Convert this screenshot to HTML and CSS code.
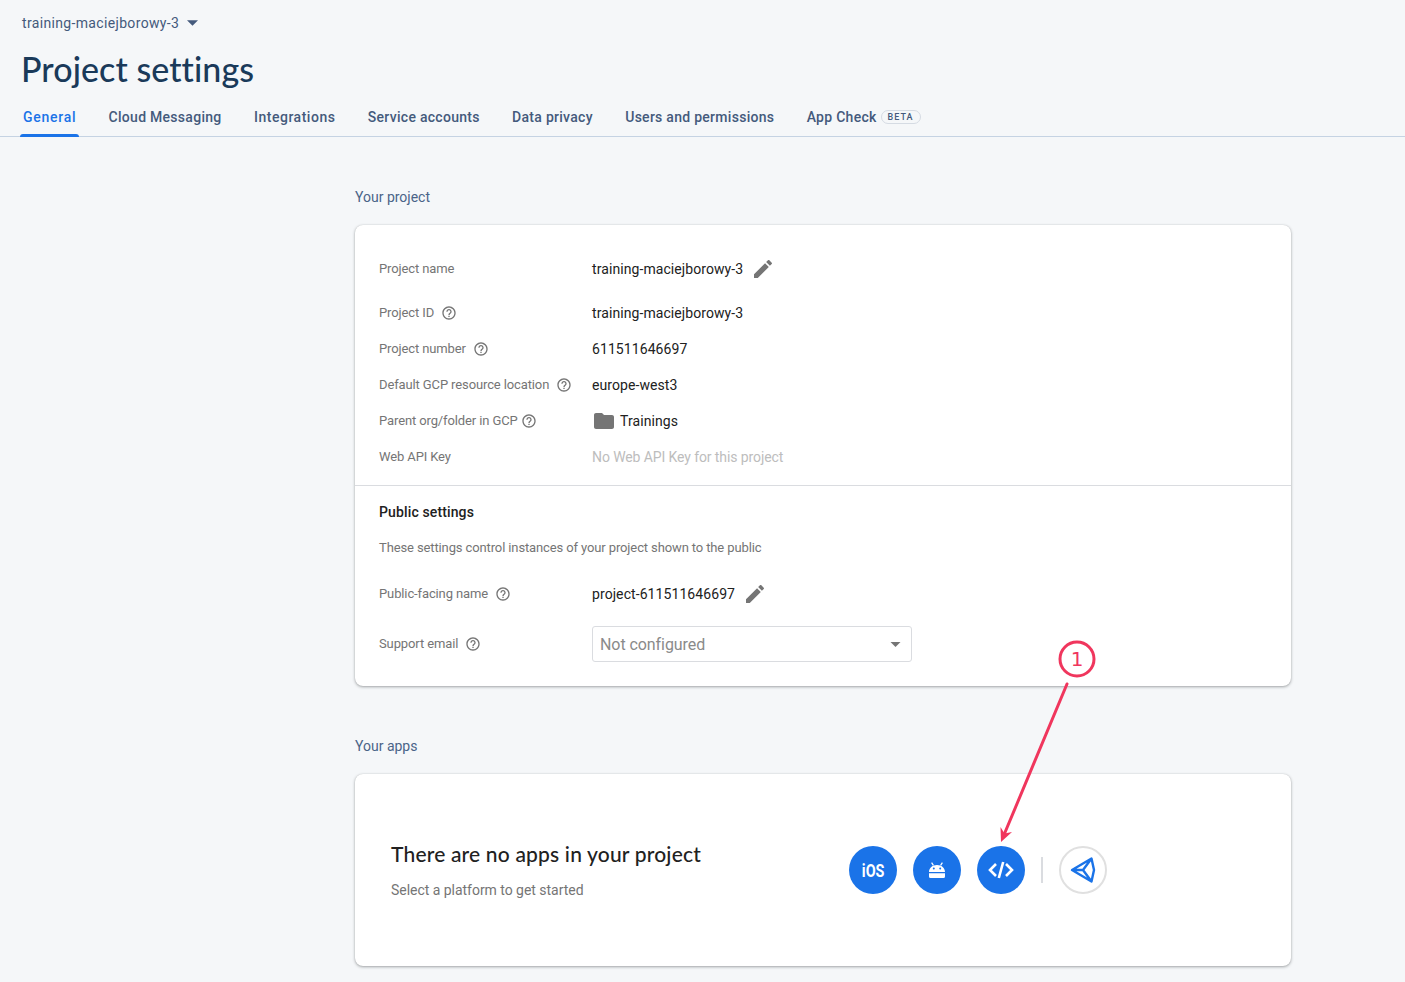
FILE: index.html
```html
<!DOCTYPE html>
<html lang="en">
<head>
<meta charset="utf-8">
<title>Project settings</title>
<link rel="stylesheet" href="styles.css">
</head>
<body>
<header class="header">
  <div class="crumb">training-maciejborowy-3 <svg class="crumb-arrow" viewBox="0 0 12 6" width="11" height="6"><path d="M0 0h12L6 6z"/></svg></div>
  <h1 class="title">Project settings</h1>
  <nav class="tabs">
    <a class="tab active">General</a>
    <a class="tab">Cloud Messaging</a>
    <a class="tab wide">Integrations</a>
    <a class="tab">Service accounts</a>
    <a class="tab">Data privacy</a>
    <a class="tab">Users and permissions</a>
    <a class="tab">App Check <span class="beta">BETA</span></a>
  </nav>
</header>
<main class="content">
  <h2 class="section">Your project</h2>
  <section class="card project">
    <div class="fields">
      <div class="row first"><div class="label">Project name</div><div class="value">training-maciejborowy-3<svg class="edit" viewBox="0 0 24 24" width="24" height="24"><use href="#i-edit"/></svg></div></div>
      <div class="row"><div class="label">Project ID<svg class="help" viewBox="0 0 24 24" width="16" height="16"><use href="#i-help"/></svg></div><div class="value">training-maciejborowy-3</div></div>
      <div class="row"><div class="label">Project number<svg class="help" viewBox="0 0 24 24" width="16" height="16"><use href="#i-help"/></svg></div><div class="value">611511646697</div></div>
      <div class="row"><div class="label">Default GCP resource location<svg class="help" viewBox="0 0 24 24" width="16" height="16"><use href="#i-help"/></svg></div><div class="value">europe-west3</div></div>
      <div class="row"><div class="label">Parent org/folder in GCP<svg class="help tight" viewBox="0 0 24 24" width="16" height="16"><use href="#i-help"/></svg></div><div class="value"><svg class="folder" viewBox="0 0 24 24" width="24" height="24"><path d="M10 4H4c-1.100 0-2 .9-2 2v12c0 1.100.9 2 2 2h16c1.100 0 2-.9 2-2V8c0-1.100-.9-2-2-2h-8l-2-2z"/></svg>Trainings</div></div>
      <div class="row"><div class="label">Web API Key</div><div class="value muted">No Web API Key for this project</div></div>
    </div>
    <div class="public">
      <h3 class="public-title">Public settings</h3>
      <p class="public-desc">These settings control instances of your project shown to the public</p>
      <div class="row facing"><div class="label">Public-facing name<svg class="help" viewBox="0 0 24 24" width="16" height="16"><use href="#i-help"/></svg></div><div class="value">project-611511646697<svg class="edit" viewBox="0 0 24 24" width="24" height="24"><use href="#i-edit"/></svg></div></div>
      <div class="row support"><div class="label">Support email<svg class="help" viewBox="0 0 24 24" width="16" height="16"><use href="#i-help"/></svg></div><div class="select"><span>Not configured</span><svg viewBox="0 0 12 6" width="11" height="5"><path d="M0 0h12L6 6z"/></svg></div></div>
    </div>
  </section>
  <h2 class="section apps-heading">Your apps</h2>
  <section class="card apps">
    <div class="apps-text">
      <h3 class="apps-title">There are no apps in your project</h3>
      <p class="apps-sub">Select a platform to get started</p>
    </div>
    <div class="platforms">
      <div class="platform"><span class="ios">iOS</span></div>
      <div class="platform">
        <svg viewBox="0 0 16 16" width="16" height="16"><path class="android-feeler" d="M2.600 .6L4.400 3.400M13.400 .6L11.600 3.400"/><path class="fill" d="M0 10C0 5.800 3.500 3 8 3s8 2.800 8 7zM4.800 5.400a1 1 0 1 0 0 2 1 1 0 0 0 0-2zm6.400 0a1 1 0 1 0 0 2 1 1 0 0 0 0-2zM0 11.200h16V14.500a1.500 1.500 0 0 1-1.500 1.500H1.500A1.500 1.500 0 0 1 0 14.500z"/></svg>
      </div>
      <div class="platform">
        <svg viewBox="0 0 28 28" width="28" height="28"><path class="stroke" d="M9 8l-6 6 6 6M19 8l6 6-6 6M16.200 6l-4.400 16"/></svg>
      </div>
      <div class="divider"></div>
      <div class="platform unity">
        <svg viewBox="0 0 28 28" width="28" height="28"><path class="unity-line" d="M3 14L22.500 2.500L25 14L22.500 25.500zM3 14H14M14 14L22.500 2.500M14 14L22.500 25.500"/></svg>
      </div>
    </div>
  </section>
</main>
<svg class="annotation" viewBox="0 0 1405 982" width="1405" height="982">
  <circle class="note-ring" cx="1077" cy="659" r="17"/>
  <text class="note-num" x="1077" y="666">1</text>
  <path class="note-line" d="M1067 684L1003.500 836"/>
  <path class="note-head" d="M1001 842L1000.500 827L1004.500 833.500L1012 832z"/>
</svg>
<svg class="defs" width="0" height="0">
  <defs>
    <symbol id="i-edit" viewBox="0 0 24 24"><path d="M3 17.250V21h3.750L17.810 9.940l-3.750-3.750L3 17.250zM20.710 7.040c.39-.39.39-1.020 0-1.410l-2.340-2.340c-.39-.39-1.020-.39-1.410 0l-1.830 1.830 3.750 3.750 1.830-1.830z"/></symbol>
    <symbol id="i-help" viewBox="0 0 24 24"><path d="M11 18h2v-2h-2v2zm1-16C6.480 2 2 6.480 2 12s4.480 10 10 10 10-4.480 10-10S17.520 2 12 2zm0 18c-4.410 0-8-3.590-8-8s3.590-8 8-8 8 3.590 8 8-3.590 8-8 8zm0-14c-2.210 0-4 1.790-4 4h2c0-1.100.9-2 2-2s2 .9 2 2c0 2-3 1.750-3 5h2c0-2.250 3-2.500 3-5 0-2.210-1.790-4-4-4z"/></symbol>
  </defs>
</svg>
</body>
</html>
```
FILE: styles.css
```css
* { box-sizing: border-box; }
html, body { margin: 0; padding: 0; }
body {
  width: 1405px;
  height: 982px;
  overflow: hidden;
  position: relative;
  background: #f5f7f9;
  font-family: Roboto, "Liberation Sans", sans-serif;
  color: #212121;
}
.header { padding: 14px 0 0 20px; border-bottom: 1px solid #c5d3e3; height: 137px; }
.crumb { height: 18px; line-height: 18px; padding-left: 2px; font-size: 14px; color: #445a7c; letter-spacing: .34px; display: flex; align-items: center; }
.crumb-arrow { margin-left: 8px; fill: #445a7c; }
.title { margin: 0; padding: 17px 0 0 1px; height: 60px; font-family: Lato, sans-serif; font-variant-ligatures: none; font-weight: 500; font-size: 34px; line-height: 40px; letter-spacing: .07px; color: #1a3a5a; }
.tabs { display: flex; gap: 26.4px; margin-top: 0; height: 45px; padding-top: 7px; }
.tab { padding: 0 3px; height: 38px; line-height: 37px; font-size: 14px; font-weight: 500; color: #445a7c; letter-spacing: .28px; white-space: nowrap; display: flex; align-items: flex-start; position: relative; }
.tab.wide { letter-spacing: .52px; }
.tab.active { color: #1a73e8; letter-spacing: .72px; }
.tab.active::after { content: ""; position: absolute; left: 0; right: 0; bottom: 0; height: 3px; background: #1a73e8; border-radius: 3px 3px 0 0; }
.beta { margin: 11px 0 0 4px; height: 14px; line-height: 12px; padding: 0 6px; border: 1px solid #d5dbe3; border-radius: 7px; font-size: 9px; letter-spacing: 1px; color: #445a7c; }
.content { margin-left: 355px; width: 936px; }
.section { margin: 0; padding-top: 50px; height: 88px; line-height: 20px; font-size: 14px; font-weight: 400; color: #4a6488; }
.apps-heading { padding-top: 50px; height: 88px; }
.card { background: #fff; border-radius: 8px; box-shadow: 0 1px 3px rgba(60,64,67,.45), 0 0 1px rgba(60,64,67,.2); }
.project { height: 461px; }
.fields { padding: 18px 24px 10px; border-bottom: 1px solid #dadce0; height: 261px; }
.row { display: flex; align-items: center; height: 36px; }
.row.first { height: 52px; }
.label { width: 213px; margin-bottom: 2px; font-size: 13px; letter-spacing: -.12px; color: #757575; display: flex; align-items: center; white-space: nowrap; }
.value { font-size: 14px; color: #212121; display: flex; align-items: center; letter-spacing: .08px; white-space: nowrap; }
.muted { color: #bdbdbd; letter-spacing: -.1px; }
.help { margin: 2px 0 0 7px; fill: #757575; }
.help.tight { margin-left: 3px; }
.edit { margin-left: 8px; fill: #757575; }
.folder { fill: #757575; margin-right: 4px; }
.public { padding: 16px 24px 0; }
.public-title { margin: 0; height: 20px; line-height: 20px; font-size: 14px; font-weight: 500; letter-spacing: .13px; color: #212121; }
.public-desc { margin: 16px 0 0; height: 20px; line-height: 20px; font-size: 13px; letter-spacing: -.12px; color: #757575; }
.row.facing { margin-top: 10px; height: 52px; }
.row.support { margin-top: 6px; height: 36px; }
.select { width: 320px; height: 36px; border: 1px solid #dadce0; border-radius: 3px; padding: 0 10px 0 7px; display: flex; align-items: center; justify-content: space-between; font-size: 16px; letter-spacing: -.07px; color: #8a8a8a; }
.select svg { fill: #757575; }
.apps { height: 192px; display: flex; align-items: center; padding-left: 36px; }
.apps-text { width: 458px; margin-top: -1px; }
.apps-title { margin: 0; font-family: Lato, sans-serif; font-weight: 500; font-size: 21px; line-height: 28px; letter-spacing: .18px; color: #212121; }
.apps-sub { margin: 12px 0 0; font-size: 14px; line-height: 20px; letter-spacing: -.03px; color: #757575; }
.platforms { display: flex; align-items: center; gap: 16px; margin-top: 0; }
.platform { width: 48px; height: 48px; border-radius: 50%; background: #1a73e8; display: flex; align-items: center; justify-content: center; color: #fff; }
.platform .fill { fill: #fff; fill-rule: evenodd; }
.platform .android-feeler { fill: none; stroke: #fff; stroke-width: 1.2; }
.platform .stroke { fill: none; stroke: #fff; stroke-width: 2.6; }
.ios { display: block; font-size: 18px; font-weight: 700; transform: scaleX(.8); }
.divider { width: 2px; height: 26px; background: #dadce0; }
.unity { background: #fff; border: 2px solid #e0e0e0; }
.unity-line { fill: none; stroke: #1a73e8; stroke-width: 2.4; stroke-linejoin: round; }
.annotation { position: absolute; left: 0; top: 0; pointer-events: none; }
.note-ring { fill: #fff; stroke: #f0365d; stroke-width: 3; }
.note-num { fill: #f0365d; font-family: "DejaVu Sans", sans-serif; font-size: 20px; text-anchor: middle; }
.note-line { fill: none; stroke: #f0365d; stroke-width: 3; stroke-linecap: round; }
.note-head { fill: #f0365d; }
.defs { position: absolute; }
```
